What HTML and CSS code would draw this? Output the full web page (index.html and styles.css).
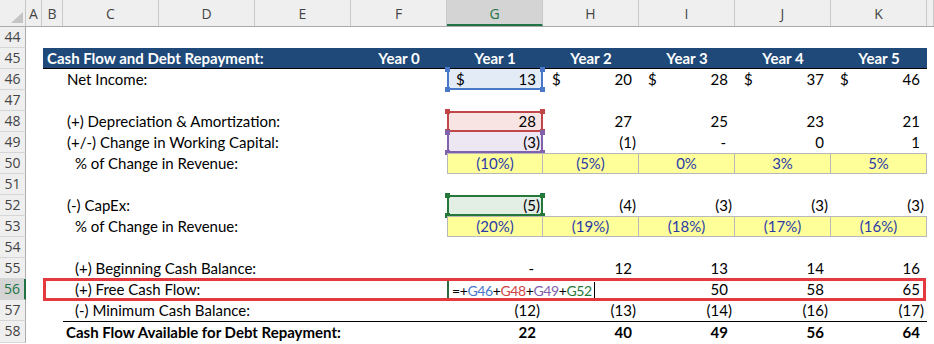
FILE: index.html
```html
<!DOCTYPE html>
<html>
<head>
<meta charset="utf-8">
<link rel="stylesheet" href="styles.css">
</head>
<body>
<div class="sheet">
  <div class="row hdr">
    <div class="corner"><svg width="26" height="27" viewBox="0 0 26 27"><polygon points="23,12 23,23 11,23" fill="#c4c4c4"/></svg></div>
    <div class="ch">A</div>
    <div class="ch">B</div>
    <div class="ch">C</div>
    <div class="ch">D</div>
    <div class="ch">E</div>
    <div class="ch">F</div>
    <div class="ch active">G</div>
    <div class="ch">H</div>
    <div class="ch">I</div>
    <div class="ch">J</div>
    <div class="ch">K</div>
    <div class="ch"></div>
  </div>

  <div class="row"><div class="rn">44</div></div>

  <div class="row">
    <div class="rn">45</div>
    <div class="bar title">Cash Flow and Debt Repayment:</div>
    <div class="bar yr">Year 0</div>
    <div class="bar yr">Year 1</div>
    <div class="bar yr">Year 2</div>
    <div class="bar yr">Year 3</div>
    <div class="bar yr">Year 4</div>
    <div class="bar yr">Year 5</div>
  </div>

  <div class="row">
    <div class="rn">46</div>
    <div class="lbl">Net Income:</div>
    <div class="c acc ref blue"><span>$</span><span class="pos">13</span></div>
    <div class="c acc"><span>$</span><span class="pos">20</span></div>
    <div class="c acc"><span>$</span><span class="pos">28</span></div>
    <div class="c acc"><span>$</span><span class="pos">37</span></div>
    <div class="c acc"><span>$</span><span class="pos">46</span></div>
  </div>

  <div class="row"><div class="rn">47</div></div>

  <div class="row">
    <div class="rn">48</div>
    <div class="lbl">(+) Depreciation &amp; Amortization:</div>
    <div class="c pos ref red">28</div>
    <div class="c pos">27</div>
    <div class="c pos">25</div>
    <div class="c pos">23</div>
    <div class="c pos">21</div>
  </div>

  <div class="row">
    <div class="rn">49</div>
    <div class="lbl">(+/-) Change in Working Capital:</div>
    <div class="c neg ref purple">(3)</div>
    <div class="c neg">(1)</div>
    <div class="c dash">-</div>
    <div class="c pos">0</div>
    <div class="c pos">1</div>
  </div>

  <div class="row">
    <div class="rn">50</div>
    <div class="lbl sub">% of Change in Revenue:</div>
    <div class="c pct first">(10%)</div>
    <div class="c pct">(5%)</div>
    <div class="c pct">0%</div>
    <div class="c pct">3%</div>
    <div class="c pct">5%</div>
  </div>

  <div class="row"><div class="rn">51</div></div>

  <div class="row">
    <div class="rn">52</div>
    <div class="lbl">(-) CapEx:</div>
    <div class="c neg ref green">(5)</div>
    <div class="c neg">(4)</div>
    <div class="c neg">(3)</div>
    <div class="c neg">(3)</div>
    <div class="c neg">(3)</div>
  </div>

  <div class="row">
    <div class="rn">53</div>
    <div class="lbl sub">% of Change in Revenue:</div>
    <div class="c pct first">(20%)</div>
    <div class="c pct">(19%)</div>
    <div class="c pct">(18%)</div>
    <div class="c pct">(17%)</div>
    <div class="c pct">(16%)</div>
  </div>

  <div class="row"><div class="rn">54</div></div>

  <div class="row">
    <div class="rn">55</div>
    <div class="lbl sub">(+) Beginning Cash Balance:</div>
    <div class="c dash">-</div>
    <div class="c pos">12</div>
    <div class="c pos">13</div>
    <div class="c pos">14</div>
    <div class="c pos">16</div>
  </div>

  <div class="row hl">
    <div class="rn active">56</div>
    <div class="lbl sub">(+) Free Cash Flow:</div>
    <div class="c edit"><span class="formula">=+<span class="f-b">G46</span>+<span class="f-r">G48</span>+<span class="f-p">G49</span>+<span class="f-g">G52</span></span><span class="caret"></span></div>
    <div class="c pos">50</div>
    <div class="c pos">58</div>
    <div class="c pos">65</div>
  </div>

  <div class="row">
    <div class="rn">57</div>
    <div class="lbl sub">(-) Minimum Cash Balance:</div>
    <div class="c neg">(12)</div>
    <div class="c neg">(13)</div>
    <div class="c neg">(14)</div>
    <div class="c neg">(16)</div>
    <div class="c neg">(17)</div>
  </div>

  <div class="row total">
    <div class="rn">58</div>
    <div class="lbl">Cash Flow Available for Debt Repayment:</div>
    <div class="c pos">22</div>
    <div class="c pos">40</div>
    <div class="c pos">49</div>
    <div class="c pos">56</div>
    <div class="c pos">64</div>
  </div>
</div>
</body>
</html>
```

FILE: styles.css
```css
html, body {
  margin: 0;
  padding: 0;
  background: #ffffff;
}

.sheet {
  width: 934px;
  height: 344px;
  overflow: hidden;
  font-family: Lato, "Liberation Sans", sans-serif;
  font-size: 15px;
  color: #000;
}

.row {
  display: grid;
  grid-template-columns: 26px 16px 21px repeat(9, 96px) 7px;
  height: 21px;
  line-height: 21px;
  position: relative;
}

.row > .rn { grid-column: 1; }

/* column header row */
.hdr {
  height: 27px;
  line-height: 27px;
  background: #efefef;
  border-bottom: 1px solid #ababab;
  box-sizing: border-box;
  font-family: "Open Sans", "Liberation Sans", sans-serif;
  font-size: 14px;
  color: #444;
}

.corner {
  border-right: 1px solid #c6c6c6;
  height: 26px;
}

.corner svg { display: block; }

.ch {
  text-align: center;
  border-right: 1px solid #c9c9c9;
  height: 26px;
  box-sizing: border-box;
}

.ch.active {
  background: #d4d4d4;
  color: #217346;
  border-bottom: 2px solid #217346;
}

/* row numbers */
.rn {
  background: #efefef;
  border-right: 1px solid #ababab;
  border-bottom: 1px solid #d6d6d6;
  box-sizing: border-box;
  text-align: center;
  font-family: "Open Sans", "Liberation Sans", sans-serif;
  font-size: 14px;
  line-height: 20px;
  color: #444;
}

.rn.active {
  background: #d4d4d4;
  color: #217346;
  border-right: 2px solid #217346;
}

/* title bar */
.bar {
  background: #1f4979;
  color: #fff;
  font-weight: 700;
  border-bottom: 1px solid #000;
  box-sizing: border-box;
  line-height: 20px;
}

.bar.title {
  grid-column: 3 / 7;
  margin-left: 1px;
  padding-left: 4px;
  white-space: nowrap;
}

.bar.yr { text-align: center; }

/* labels */
.lbl {
  grid-column: 4 / 8;
  padding-left: 4px;
  white-space: nowrap;
}

.lbl.sub { padding-left: 12px; }

.total .lbl { font-weight: 700; padding-left: 3px; }

/* value cells */
.c {
  position: relative;
  box-sizing: border-box;
  white-space: nowrap;
}

.pos { text-align: right; padding-right: 7px; }
.neg { text-align: right; padding-right: 3px; }
.dash { text-align: right; padding-right: 9px; }

.acc {
  display: flex;
  justify-content: space-between;
  padding-left: 9px;
}

.acc .pos { padding-right: 7px; }

.pct {
  background: #ffff99;
  color: #2b3aa8;
  text-align: center;
  border: 1px solid #b8b8b8;
  border-left: none;
  line-height: 19px;
}

.pct.first { border-left: 1px solid #b8b8b8; }

.total .lbl,
.total .c {
  border-top: 1px solid #000;
}

.total .c { font-weight: 700; line-height: 20px; }

/* reference highlight boxes */
.ref::before {
  content: "";
  position: absolute;
  inset: 0;
  border: 2px solid var(--rc);
  pointer-events: none;
}

.ref::after {
  content: "";
  position: absolute;
  inset: -2px;
  background-image:
    linear-gradient(var(--rc), var(--rc)),
    linear-gradient(var(--rc), var(--rc)),
    linear-gradient(var(--rc), var(--rc)),
    linear-gradient(var(--rc), var(--rc));
  background-size: 5px 5px;
  background-position: 0 0, 100% 0, 0 100%, 100% 100%;
  background-repeat: no-repeat;
  pointer-events: none;
}

.ref.blue { --rc: #4a78c8; background: #e3ebf6; }
.ref.blue::before { border-top: none; }
.ref.red { --rc: #c0464a; background: #f9e4e4; }
.ref.purple { --rc: #8262ad; background: #ede7f4; }
.ref.purple::before { border-top: none; }
.ref.green { --rc: #24793a; background: #e3eee5; }

/* editing cell */
.edit {
  padding-left: 3px;
  border-top: 2px solid #2d6b3f;
  border-left: 2px solid #2d6b3f;
  line-height: 19px;
  overflow: visible;
  z-index: 2;
}

.formula {
  color: #000;
  font-size: 14px;
  letter-spacing: -0.4px;
}
.f-b { color: #4a78c8; }
.f-r { color: #cf4446; }
.f-p { color: #8262ad; }
.f-g { color: #24793a; }

.caret {
  display: inline-block;
  width: 1px;
  height: 17px;
  background: #000;
  vertical-align: -3px;
  margin-left: 2px;
}

.edit + .c { grid-column: 10; }

/* red highlight rectangle */
.hl::after {
  content: "";
  position: absolute;
  left: 43px;
  right: 8px;
  top: -1px;
  bottom: -1px;
  border: 3px solid #e3393f;
  pointer-events: none;
  z-index: 3;
}
```
